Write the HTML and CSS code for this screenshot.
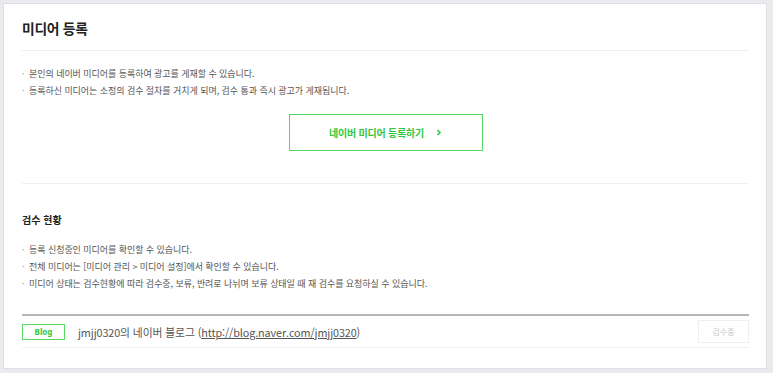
FILE: index.html
```html
<!DOCTYPE html>
<html lang="ko">
<head>
<meta charset="utf-8">
<title>미디어 등록</title>
<link rel="stylesheet" href="styles.css">
</head>
<body>
<div class="card">
  <div class="header">
    <h1 class="title">미디어 등록</h1>
  </div>
  <ul class="notes first">
    <li>본인의 네이버 미디어를 등록하여 광고를 게재할 수 있습니다.</li>
    <li>등록하신 미디어는 소정의 검수 절차를 거치게 되며, 검수 통과 즉시 광고가 게재됩니다.</li>
  </ul>
  <div class="action">
    <a class="register-btn" href="#">네이버 미디어 등록하기<span class="chev">
      <svg width="6" height="7" viewBox="0 0 6 7"><path d="M1.5 1 L4 3.5 L1.5 6" fill="none" stroke="#31c640" stroke-width="1.6"/></svg>
    </span></a>
  </div>
  <div class="section">
    <h2 class="subtitle">검수 현황</h2>
    <ul class="notes">
      <li>등록 신청중인 미디어를 확인할 수 있습니다.</li>
      <li>전체 미디어는 [미디어 관리 &gt; 미디어 설정]에서 확인할 수 있습니다.</li>
      <li>미디어 상태는 검수현황에 따라 검수중, 보류, 반려로 나뉘며 보류 상태일 때 재 검수를 요청하실 수 있습니다.</li>
    </ul>
    <div class="media-list">
      <div class="media-row">
        <span class="badge">Blog</span>
        <span class="media-name">jmjj0320의 네이버 블로그 (<a class="media-link" href="#">http://blog.naver.com/jmjj0320</a>)</span>
        <span class="status">검수중</span>
      </div>
    </div>
  </div>
</div>
</body>
</html>
```

FILE: styles.css
```css
html, body {
  margin: 0;
  padding: 0;
}
body {
  background: #e9ebee;
  font-family: "Noto Sans CJK KR", "Noto Sans", sans-serif;
  color: #333;
}
.card {
  margin: 3px 6px 4px 3px;
  background: #fff;
  border: 1px solid #dcdfe3;
  padding: 0 17px 20px 18px;
}
.header {
  padding: 12px 0 10px;
  border-bottom: 1px solid #eceef1;
}
.title {
  margin: 0;
  font-size: 13.8px;
  line-height: 24px;
  font-weight: 700;
  color: #222;
  letter-spacing: -0.3px;
}
.notes {
  list-style: none;
  margin: 0;
  padding: 0;
}
.notes.first {
  margin-top: 14px;
}
.notes li {
  position: relative;
  padding-left: 7px;
  font-size: 9px;
  line-height: 17px;
  color: #555;
  letter-spacing: -0.05px;
}
.notes li::before {
  content: "·";
  position: absolute;
  left: 0;
  top: 0;
  color: #999;
}
.action {
  display: flex;
  justify-content: center;
  padding: 15px 0 32px;
  border-bottom: 1px solid #eef0f2;
}
.register-btn {
  display: flex;
  align-items: center;
  justify-content: center;
  width: 192px;
  height: 35px;
  border: 1px solid #55d667;
  color: #31c640;
  font-size: 10px;
  font-weight: 700;
  text-decoration: none;
  letter-spacing: -0.2px;
}
.chev {
  display: inline-flex;
  margin-left: 12px;
}
.section {
  padding-top: 26px;
}
.subtitle {
  margin: 0 0 11px;
  font-size: 10px;
  line-height: 20px;
  font-weight: 700;
  color: #222;
}
.media-list {
  margin-top: 22px;
  border-top: 2px solid #b4b6b9;
}
.media-row {
  display: flex;
  align-items: center;
  height: 31px;
  border-bottom: 1px solid #f1f2f4;
}
.badge {
  display: flex;
  align-items: center;
  justify-content: center;
  width: 41px;
  height: 14px;
  border: 1px solid #58d768;
  color: #31c640;
  font-family: "Noto Sans", sans-serif;
  font-size: 8px;
  font-weight: 700;
}
.media-name {
  margin-left: 13px;
  font-size: 10.8px;
  color: #555;
  flex: 1;
  letter-spacing: -0.1px;
}
.media-link {
  color: #555;
  text-decoration: underline;
}
.status {
  display: flex;
  align-items: center;
  justify-content: center;
  width: 49px;
  height: 21px;
  border: 1px solid #eeeff1;
  color: #c8c8c8;
  font-size: 8px;
}
```
